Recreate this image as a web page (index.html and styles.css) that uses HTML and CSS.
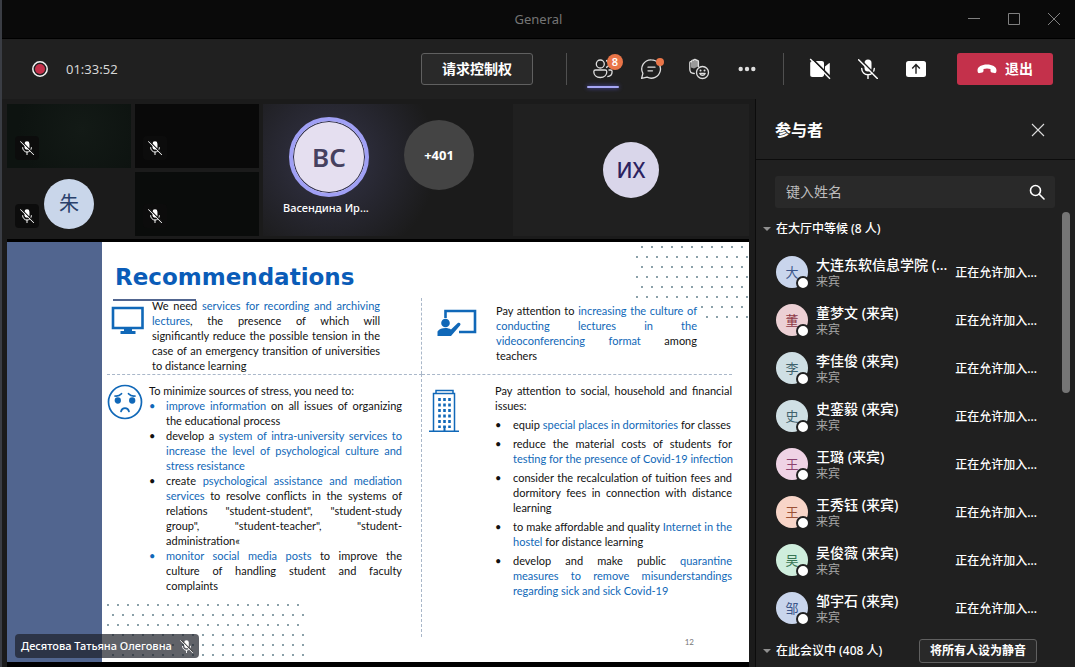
FILE: index.html
```html
<!DOCTYPE html>
<html lang="zh-CN">
<head>
<meta charset="utf-8">
<meta name="viewport" content="width=device-width, initial-scale=1">
<title>General</title>
<link rel="stylesheet" href="styles.css">
</head>
<body>
<svg class="defs" aria-hidden="true">
  <symbol id="mic-off" viewBox="0 0 20 20">
    <rect x="6.500" y="0.500" width="7" height="12" rx="3.500" fill="currentColor"/>
    <path d="M3.700 9.500a6.300 6.300 0 0 0 12.600 0M10 15.800v3.700" fill="none" stroke="currentColor" stroke-width="1.400" stroke-linecap="round"/>
    <path d="M1.800 0L20 18.300" stroke="var(--cut)" stroke-width="1.600"/>
    <path d="M.6 .8L19.400 19.600" stroke="currentColor" stroke-width="1.400" stroke-linecap="round"/>
  </symbol>
</svg>
<div class="window">
  <header class="titlebar">
    <span class="title">General</span>
    <div class="window-controls">
      <button type="button" aria-label="最小化"><svg width="14" height="14" viewBox="0 0 14 14"><path d="M1 6.500h12"/></svg></button>
      <button type="button" aria-label="最大化"><svg width="14" height="14" viewBox="0 0 14 14"><path d="M1.500 1.500h11v11h-11z"/></svg></button>
      <button type="button" aria-label="关闭窗口"><svg width="14" height="14" viewBox="0 0 14 14"><path d="M1 1l12 12M13 1L1 13"/></svg></button>
    </div>
  </header>

  <div class="toolbar">
    <svg class="record" width="16" height="16" viewBox="0 0 16 16"><circle cx="8" cy="8" r="7.200" fill="none" stroke="#f4f4f4" stroke-width="1.500"/><circle cx="8" cy="8" r="5" fill="#c4314b"/></svg>
    <time class="timer">01:33:52</time>
    <button type="button" class="outline-button request">请求控制权</button>
    <span class="divider"></span>
    <div class="tools">
      <button type="button" class="tool active" aria-label="参与者">
        <svg width="22" height="22" viewBox="0 0 22 22" fill="none" stroke="#dedede" stroke-width="1.300"><circle cx="8.300" cy="6" r="4"/><path d="M3.500 12h9.600c1 0 1.700.7 1.700 1.700 0 3.300-2.500 5.800-6.500 5.800s-6.500-2.500-6.500-5.800c0-1 .7-1.700 1.700-1.700z"/><path d="M14 2.500a3.600 3.600 0 0 1 0 7M16.500 12h2c1 0 1.600.6 1.600 1.600 0 3.300-1.600 5-4.800 5"/></svg>
        <span class="count">8</span>
      </button>
      <button type="button" class="tool" aria-label="聊天">
        <svg width="22" height="22" viewBox="0 0 22 22" fill="none" stroke="#dedede" stroke-width="1.300" stroke-linecap="round" stroke-linejoin="round"><path d="M11.300 1.800a9.200 9.200 0 1 1-4.200 17.400L1.600 20.400l1.300-5A9.200 9.200 0 0 1 11.300 1.800zM8 9.200h7M8 12.800h4.500"/></svg>
        <span class="dot"></span>
      </button>
      <button type="button" class="tool" aria-label="反应">
        <svg width="22" height="22" viewBox="0 0 22 22" fill="none" stroke="#dedede" stroke-width="1.300" stroke-linecap="round" stroke-linejoin="round"><path d="M3 3.500c0-1 1.600-1.200 1.900-.2C4.900 1.600 6.700 1.400 7 2.600c.3-1.300 2.100-1.200 2.300.1.500-.8 1.800-.5 1.800.7V8L6 10.500l-3-1z" fill="#9a9a9a" stroke="none"/><path d="M1.800 5v6.300c0 2.700 1.900 4.200 4.500 4.200M1.800 5c0-1.400 1.300-1.700 1.600-1.300C3.500 2.200 5 1.700 5.500 2.400 6 1.100 7.800 1.200 8.200 2.300c1.200-.5 2.200.3 2.200 1.500v4.700"/><circle cx="14.500" cy="14.500" r="6" fill="#202020"/><path d="M11.800 15.500c1.200 2.500 4.200 2.500 5.400 0z"/><path d="M12.500 12.500h.1M16.500 12.500h.1" stroke-width="1.900"/></svg>
      </button>
      <button type="button" class="tool" aria-label="更多">
        <svg width="20" height="20" viewBox="0 0 20 20" fill="#dedede"><circle cx="3.700" cy="10" r="2.200"/><circle cx="10" cy="10" r="2.200"/><circle cx="16.300" cy="10" r="2.200"/></svg>
      </button>
    </div>
    <span class="divider"></span>
    <div class="tools">
      <button type="button" class="tool" aria-label="打开摄像头">
        <svg width="22" height="22" viewBox="0 0 22 22"><path d="M3.500 3h9.300c1.400 0 2.200.9 2.200 2.200v11.600c0 1.300-.8 2.200-2.200 2.200H3.500c-1.600 0-2.300-1-2.300-2.300V5.300C1.200 4 2 3 3.500 3zM16 8.400l4-3.200c.5-.4.8-.1.800.4v10.800c0 .5-.3.800-.8.400l-4-3.200z" fill="#fff"/><path d="M2.600 0L22 19.400" stroke="#202020" stroke-width="1.800"/><path d="M1.200 1L21 20.800" stroke="#fff" stroke-width="1.400"/></svg>
      </button>
      <button type="button" class="tool" aria-label="取消静音"><svg width="20" height="20"><use href="#mic-off"/></svg></button>
      <button type="button" class="tool" aria-label="共享">
        <svg width="20" height="16" viewBox="0 0 20 16"><rect width="20" height="16" rx="2.500" fill="#fff"/><path d="M10 12.800V3.800M6.200 7.500L10 3.600l3.800 3.900" fill="none" stroke="#202020" stroke-width="1.400"/></svg>
      </button>
    </div>
    <button type="button" class="leave">
      <svg width="20" height="10" viewBox="0 0 20 10"><path d="M10 .5c5.300 0 9.500 2.300 9.500 5.700 0 2-.8 3.200-2.100 2.900l-2.600-.6c-.9-.2-1.300-.8-1.300-1.700V5.100a11 11 0 0 0-7 0v1.700c0 .9-.4 1.500-1.300 1.700l-2.600.6C1.300 9.400.5 8.200.5 6.200.5 2.800 4.700.5 10 .5z" fill="#fff"/></svg>
      退出
    </button>
  </div>

  <div class="content">
    <main class="stage">
      <div class="gallery">
        <div class="tile video green"><span class="muted"><svg width="14" height="14"><use href="#mic-off"/></svg></span></div>
        <div class="tile video"><span class="muted"><svg width="14" height="14"><use href="#mic-off"/></svg></span></div>
        <div class="tile person"><span class="muted"><svg width="14" height="14"><use href="#mic-off"/></svg></span><span class="face zhu">朱</span></div>
        <div class="tile video dim"><span class="muted"><svg width="14" height="14"><use href="#mic-off"/></svg></span></div>
        <div class="tile speakers">
          <div class="speaker"><span class="face talking">ВС</span><span class="speaker-name">Васендина Ир...</span></div>
          <span class="face more">+401</span>
        </div>
        <div class="tile self"><span class="face self-face">ИХ</span></div>
      </div>

      <div class="share">
        <article class="slide" lang="en">
          <div class="band"></div>
          <div class="paper">
            <svg class="dots dots-top" width="114" height="74" viewBox="0 0 114 74"><path d="M7 2H108M2 12H113M7 22H108M2 32H113M7 42H108M2 52H113M67 62H108M72 72H113"/></svg>
            <svg class="dots dots-bottom" width="200" height="54" viewBox="0 0 200 54"><path d="M2 2H193M7 12H198M2 22H193M7 32H198M7 42H198M7 52H198"/></svg>
            <h1>Recommendations</h1>
            <div class="quads">
              <section class="quad q1">
                <svg class="pic" width="34" height="29" viewBox="0 0 34 29"><path d="M2 2h29.500v20H2z" fill="none" stroke="#1068b8" stroke-width="2.600"/><path d="M13 22h8v3h3.500v3H9.500v-3H13z" fill="#1068b8"/></svg>
                <p>We need <b>services for recording and archiving lectures</b>, the presence of which will significantly reduce the possible tension in the case of an emergency transition of universities to distance learning</p>
              </section>
              <section class="quad q2">
                <svg class="pic" width="40" height="28" viewBox="0 0 40 28"><path d="M8.500 9V2H38v21H22" fill="none" stroke="#1068b8" stroke-width="2.600"/><circle cx="8.500" cy="14" r="4.300" fill="#1068b8"/><path d="M.5 27v-4.500C2.500 19.500 5 19 8.500 19c2 0 4 .5 5.500 1.500l6.500-6.300c2-1.400 4 .6 2.500 2.400L14 27z" fill="#1068b8"/></svg>
                <p>Pay attention to <b>increasing the culture of conducting lectures in the videoconferencing format</b> among teachers</p>
              </section>
              <section class="quad q3">
                <svg class="pic" width="36" height="36" viewBox="0 0 36 36" fill="none" stroke="#1068b8" stroke-width="1.700" stroke-linecap="round"><circle cx="18" cy="18" r="16.500"/><path d="M8 12c3 .3 5-.6 6.500-2.300M28 12c-3 .3-5-.6-6.500-2.300M14 27.500c1-4.500 7-4.500 8 0"/><circle cx="10.800" cy="16.500" r="2.300" fill="#1068b8"/><circle cx="25.200" cy="16.500" r="2.300" fill="#1068b8"/></svg>
                <div class="text">
                  <p>To minimize sources of stress, you need to:</p>
                  <ul>
                    <li class="blue"><b>improve information</b> on all issues of organizing the educational process</li>
                    <li>develop a <b>system of intra-university services to increase the level of psychological culture and stress resistance</b></li>
                    <li>create <b>psychological assistance and mediation services</b> to resolve conflicts in the systems of relations "student-student", "student-study group", "student-teacher", "student-administration«</li>
                    <li class="blue"><b>monitor social media posts</b> to improve the culture of handling student and faculty complaints</li>
                  </ul>
                </div>
              </section>
              <section class="quad q4">
                <svg class="pic" width="30" height="44" viewBox="0 0 30 44" fill="none" stroke="#1068b8"><path d="M4.500 42V4.500h21V42M7 4V1.500h17V4M0 42.300h30" stroke-width="1.500"/><path d="M10.500 9v30M15.500 9v30M20.500 9v30" stroke-width="2.600" stroke-dasharray="3 2.500"/><path d="M15.500 37v5" stroke-width="2"/></svg>
                <div class="text">
                  <p>Pay attention to social, household and financial issues:</p>
                  <ul>
                    <li>equip <b>special places in dormitories</b> for classes</li>
                    <li>reduce the material costs of students for <b class="keep">testing for the presence of Covid-19 infection</b></li>
                    <li>consider the recalculation of tuition fees and dormitory fees in connection with distance learning</li>
                    <li>to make affordable and quality <b>Internet in the hostel</b> for distance learning</li>
                    <li>develop and make public <b>quarantine measures to remove misunderstandings regarding sick and sick Covid-19</b></li>
                  </ul>
                </div>
              </section>
            </div>
            <span class="page">12</span>
          </div>
        </article>
        <div class="presenter" lang="ru">Десятова Татьяна Олеговна <svg width="13" height="13"><use href="#mic-off"/></svg></div>
      </div>
    </main>

    <aside class="panel">
      <div class="panel-head">
        <h2>参与者</h2>
        <button type="button" aria-label="关闭"><svg width="14" height="14" viewBox="0 0 14 14"><path d="M1 1l12 12M13 1L1 13" stroke="#dcdcdc" stroke-width="1.100"/></svg></button>
      </div>
      <label class="search">
        <input type="text" placeholder="键入姓名" aria-label="键入姓名">
        <svg width="16" height="16" viewBox="0 0 16 16" fill="none" stroke="#fff" stroke-width="1.600" stroke-linecap="round"><circle cx="6.500" cy="6.500" r="5"/><path d="M10.300 10.300L15 15"/></svg>
      </label>
      <div class="group"><span class="caret"></span><h3>在大厅中等候 (8 人)</h3></div>
      <ul class="people">
        <li><span class="avatar a1">大</span><div class="who"><span class="name">大连东软信息学院 (...</span><span class="role">来宾</span></div><span class="state">正在允许加入...</span></li>
        <li><span class="avatar a2">董</span><div class="who"><span class="name">董梦文 (来宾)</span><span class="role">来宾</span></div><span class="state">正在允许加入...</span></li>
        <li><span class="avatar a3">李</span><div class="who"><span class="name">李佳俊 (来宾)</span><span class="role">来宾</span></div><span class="state">正在允许加入...</span></li>
        <li><span class="avatar a3">史</span><div class="who"><span class="name">史銮毅 (来宾)</span><span class="role">来宾</span></div><span class="state">正在允许加入...</span></li>
        <li><span class="avatar a4">王</span><div class="who"><span class="name">王璐 (来宾)</span><span class="role">来宾</span></div><span class="state">正在允许加入...</span></li>
        <li><span class="avatar a5">王</span><div class="who"><span class="name">王秀钰 (来宾)</span><span class="role">来宾</span></div><span class="state">正在允许加入...</span></li>
        <li><span class="avatar a6">吴</span><div class="who"><span class="name">吴俊薇 (来宾)</span><span class="role">来宾</span></div><span class="state">正在允许加入...</span></li>
        <li><span class="avatar a1">邹</span><div class="who"><span class="name">邹宇石 (来宾)</span><span class="role">来宾</span></div><span class="state">正在允许加入...</span></li>
      </ul>
      <div class="group last"><span class="caret"></span><h3>在此会议中 (408 人)</h3><button type="button" class="outline-button mute-all">将所有人设为静音</button></div>
      <span class="scroll-thumb"></span>
    </aside>
  </div>
</div>
</body>
</html>
```
FILE: styles.css
```css
*, *::before, *::after { box-sizing: border-box; }

body {
  margin: 0;
  background: #3a3d44;
  color: #fff;
  font: 14px/20px "Noto Sans", "Noto Sans CJK SC", sans-serif;
}

h1, h2, h3, p, ul { margin: 0; padding: 0; }
ul { list-style: none; }
b { font-weight: inherit; color: #1068b8; }

button {
  margin: 0;
  padding: 0;
  border: 0;
  background: none;
  color: inherit;
  font: inherit;
}

svg { display: block; flex: none; }
.defs { position: absolute; width: 0; height: 0; }

.window {
  --cut: #202020;
  display: flex;
  flex-direction: column;
  min-height: 100vh;
  margin-left: 2px;
  background: #1b1b1b;
}

/* title bar */
.titlebar {
  display: grid;
  grid-template-columns: 1fr auto 1fr;
  align-items: center;
  height: 39px;
  background: #0a0a0a;
  border-bottom: 1px solid #000;
}

.title { grid-column: 2; color: #757575; font-size: 13px; }
.window-controls { display: flex; justify-content: flex-end; padding-right: 1px; }
.window-controls button { display: grid; place-items: center; width: 40px; height: 38px; }
.window-controls path { fill: none; stroke: #808080; stroke-width: 1; }

/* toolbar */
.toolbar {
  display: flex;
  align-items: center;
  height: 60px;
  padding: 0 22px 0 30px;
  background: #202020;
}

.timer { margin-left: 18px; color: #d6d6d6; font-size: 13px; }

.outline-button {
  border: 1px solid #606060;
  border-radius: 3px;
  background: #292929;
  font-weight: 700;
}

.request { width: 112px; height: 32px; margin-left: auto; }
.divider { width: 1px; height: 32px; margin: 0 12px; background: #505050; }
.request + .divider { margin-left: 33px; }
.tools { display: flex; }

.tool {
  position: relative;
  display: grid;
  place-items: center;
  width: 48px;
  height: 40px;
}

.active::after {
  content: "";
  position: absolute;
  left: 8px;
  right: 8px;
  bottom: 1px;
  height: 2px;
  border-radius: 1px;
  background: #a6a7f5;
  box-shadow: 0 0 4px #5c5cd0;
}

.count {
  position: absolute;
  top: 5px;
  right: 4px;
  width: 16px;
  height: 16px;
  border-radius: 50%;
  background: #e97548;
  font-size: 11px;
  font-weight: 600;
  line-height: 16px;
}

.dot {
  position: absolute;
  top: 9px;
  right: 11px;
  width: 8px;
  height: 8px;
  border-radius: 50%;
  background: #e97548;
}

.leave {
  display: flex;
  align-items: center;
  justify-content: center;
  gap: 8px;
  width: 96px;
  height: 32px;
  margin-left: 17px;
  border-radius: 3px;
  background: #c4314b;
  font-weight: 700;
}

/* meeting stage */
.content { display: flex; flex: 1; }
.stage { display: flex; flex-direction: column; flex: 1; min-width: 0; padding: 5px 6px 0 5px; }

.gallery {
  display: grid;
  grid-template-columns: 124fr 124fr 246fr 236fr;
  grid-template-rows: 64px 64px;
  gap: 4px;
}

.tile { position: relative; display: flex; align-items: center; }
.video { background: #090909; }
.green { background: radial-gradient(circle at 60% 40%, #131a16, #0d1310 75%); }
.dim { background: #0a0c0b; }
.person { justify-content: center; }
.speakers {
  grid-area: 1 / 3 / 3 / 4;
  align-items: flex-start;
  gap: 29px;
  padding: 13px 16px 0 20px;
  background: radial-gradient(circle at 27% 42%, #2b2b38 20%, #1b1b1b 55%);
}
.self { grid-area: 1 / 4 / 3 / 5; justify-content: center; background: #202020; }

.muted {
  position: absolute;
  left: 8px;
  bottom: 8px;
  display: grid;
  place-items: center;
  width: 24px;
  height: 24px;
  border-radius: 4px;
  background: #0c0c0c;
}

.face { display: grid; place-items: center; flex: none; border-radius: 50%; }
.zhu { width: 50px; height: 50px; background: #c9d6ea; color: #29406b; font-size: 20px; }
.speaker { display: flex; flex-direction: column; align-items: center; gap: 2px; width: 92px; }
.talking {
  width: 80px;
  height: 80px;
  border: 4px solid #a0a0f5;
  background: #e5dff0;
  box-shadow: inset 0 0 0 1px #282840;
  color: #46415f;
  font-size: 26px;
  font-weight: 600;
}
.speaker-name { align-self: flex-start; font-size: 11px; line-height: 18px; font-weight: 500; white-space: nowrap; }
.more { width: 70px; height: 70px; margin-top: 3px; background: #444; font-size: 13px; font-weight: 700; }
.self-face { width: 56px; height: 56px; background: #d9d6ea; color: #2c2360; font-size: 21px; font-weight: 500; }

/* shared slide */
.share {
  position: relative;
  display: flex;
  flex: 1;
  margin-top: 3px;
  padding: 3px 0 5px;
  background: #000;
}

.slide {
  display: flex;
  flex: 1;
  background: #fff;
  color: #111;
  font: 11px/15px Lato, "Open Sans", sans-serif;
}

.band { width: 95px; background: #51658f; }
.paper { position: relative; display: flex; flex-direction: column; flex: 1; padding: 19px 17px 0 5px; }

.dots { position: absolute; fill: none; stroke: #64818c; stroke-width: 2; stroke-linecap: round; stroke-dasharray: 0 10; }
.dots-top { top: 3px; right: 0; }
.dots-bottom { left: 4px; bottom: 5px; }

h1 {
  padding-left: 8px;
  color: #0a5cb8;
  font: 700 23px/32px Verdana, "DejaVu Sans", sans-serif;
}

.quads { display: grid; grid-template-columns: minmax(0, 315fr) minmax(0, 310fr); grid-template-rows: 76px 263px; margin-top: 5px; }
.quad { position: relative; display: flex; align-items: flex-start; text-align: justify; }
.quad .text { flex: 1; min-width: 0; }
.quad p { flex: 1; }
.q1 { padding: 0 41px 0 4px; gap: 7px; border-right: 1px dashed #a9b7c9; }
.q1 .pic { margin-top: 8px; }
.q1::before { content: ""; position: absolute; left: 6px; top: 1px; width: 83px; height: 2px; background: #51658f; }
.q2 { padding: 5px 35px 0 15px; gap: 19px; }
.q2 .pic { margin-top: 6px; }
.q3 { padding: 8px 19px 0 0; gap: 6px; border-top: 1px dashed #a9b7c9; border-right: 1px dashed #a9b7c9; }
.q3 .pic { margin-top: 1px; }
.q4 { padding: 8px 0 0 7px; gap: 36px; border-top: 1px dashed #a9b7c9; }
.q4 .pic { margin-top: 6px; }
.quad li { position: relative; padding-left: 17px; }
.quad li::before { content: "•"; position: absolute; left: 0; }
.quad .blue::before { color: #1068b8; }
.q4 li { margin-top: 4px; padding-left: 18px; }
.keep { white-space: nowrap; }
.page { align-self: flex-end; margin: -2px 38px 0 0; color: #777; font-size: 8px; }

.presenter {
  --cut: #444;
  position: absolute;
  left: 8px;
  bottom: 9px;
  display: flex;
  align-items: center;
  gap: 8px;
  height: 24px;
  padding: 0 6px;
  border-radius: 4px;
  background: rgba(28, 32, 40, 0.7);
  font-size: 11px;
  font-weight: 500;
}

/* participants */
.panel {
  position: relative;
  width: 320px;
  border-left: 1px solid #0c0c0c;
  background: #202020;
}

.panel-head {
  display: flex;
  align-items: center;
  justify-content: space-between;
  height: 61px;
  padding: 2px 30px 0 19px;
  border-bottom: 1px solid #0c0c0c;
}

h2 { font-size: 16px; line-height: 24px; }

.search {
  display: flex;
  align-items: center;
  height: 32px;
  margin: 16px 20px 0 19px;
  padding: 0 10px 0 11px;
  border-radius: 3px;
  background: #292929;
}

.search input { flex: 1; min-width: 0; padding: 0; border: 0; outline: 0; background: none; color: #fff; font: inherit; }
.search input::placeholder { color: #bdbdbd; opacity: 1; }

.group { display: flex; align-items: center; height: 40px; padding: 2px 38px 0 7px; }
.last { height: 35px; }
.caret { border: 4px solid transparent; border-top-color: #909090; border-bottom: 0; margin-right: 5px; }
h3 { font-size: 12px; font-weight: 500; }
.mute-all { width: 118px; height: 24px; margin-left: auto; font-size: 12px; line-height: 20px; }

.people li { display: flex; align-items: center; height: 48px; padding: 0 38px 0 20px; }
.avatar {
  position: relative;
  display: grid;
  place-items: center;
  width: 32px;
  height: 32px;
  border-radius: 50%;
  font-size: 13px;
}
.avatar::after {
  content: "";
  position: absolute;
  right: -2px;
  bottom: -2px;
  width: 14px;
  height: 14px;
  border: 2px solid #202020;
  border-radius: 50%;
  background: #fff;
}
.a1 { background: #c9d5ec; color: #3c568a; }
.a2 { background: #ecd0d4; color: #8c3846; }
.a3 { background: #cfdfe4; color: #3f626c; }
.a4 { background: #efd3e5; color: #8c4270; }
.a5 { background: #f8d5c8; color: #9b5136; }
.a6 { background: #cfeedd; color: #377553; }

.who { display: flex; flex-direction: column; margin-left: 8px; padding-top: 2px; }
.name { line-height: 18px; font-weight: 500; white-space: nowrap; }
.role { color: #a6a6a6; font-size: 12px; line-height: 16px; }
.state { margin-left: auto; padding-top: 2px; font-size: 12px; font-weight: 500; white-space: nowrap; }

.scroll-thumb {
  position: absolute;
  top: 113px;
  right: 5px;
  width: 8px;
  height: 181px;
  border-radius: 4px;
  background: #757575;
}
```
